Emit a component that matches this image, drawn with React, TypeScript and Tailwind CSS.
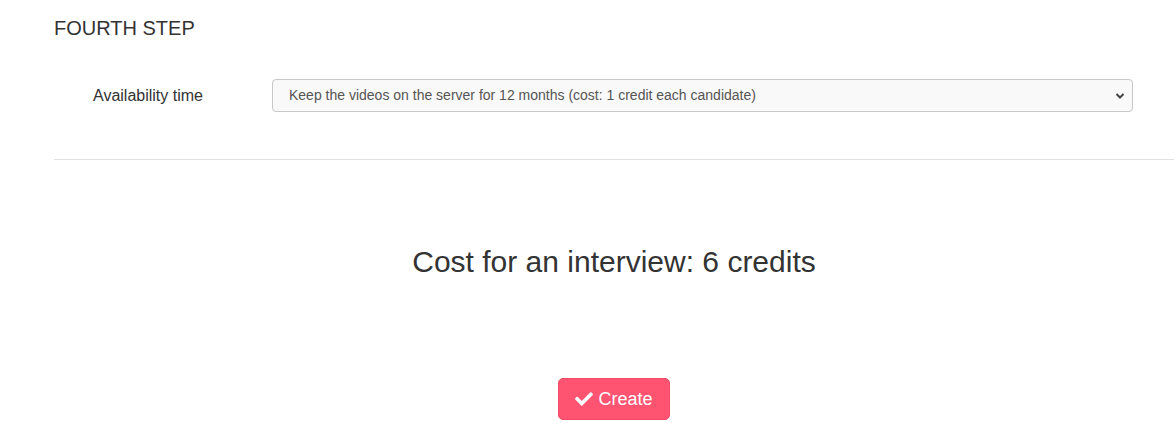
import React from "react";

export default function App() {
  return (
    <div className="w-[1176px] h-[434px] bg-white text-[#333] overflow-hidden" style={{ fontFamily: '"Liberation Sans", Arial, sans-serif' }}>
      <div className="ml-[54px] w-[1120px]">
        <h3 className="text-[20px] leading-[22px] pt-[17px] m-0">FOURTH STEP</h3>
        <div className="flex items-center mt-[40px]">
          <label className="w-[218px] pl-[39px] text-[16px]">Availability time</label>
          <div className="relative w-[861px]">
            <select
              defaultValue="12"
              className="appearance-none w-full h-[33px] border border-[#c8c8c8] rounded-[4px] bg-[#f9f9f9] pl-[16px] text-[14px] text-[#555] outline-none"
              style={{ fontFamily: '"Liberation Sans", Arial, sans-serif' }}
            >
              <option value="12">Keep the videos on the server for 12 months (cost: 1 credit each candidate)</option>
            </select>
            <svg className="absolute right-[8px] top-[13px] pointer-events-none" width="10" height="8" viewBox="0 0 10 8">
              <path d="M1.5 2 L5 5.5 L8.5 2" fill="none" stroke="#444" strokeWidth="2" />
            </svg>
          </div>
        </div>
        <div className="mt-[47px] border-t border-[#e2e2e2]" />
        <div className="text-center text-[30px] leading-[34px] mt-[85px]">Cost for an interview: 6 credits</div>
        <div className="flex justify-center mt-[99px]">
          <button className="flex items-center gap-[4px] h-[42px] pl-[15px] pr-[16px] rounded-[5px] bg-[#ff5471] text-white text-[18px] border border-[#f24a66]">
            <svg width="20" height="18" viewBox="0 0 512 512">
              <path fill="white" d="M173.898 439.404l-166.4-166.4c-9.997-9.997-9.997-26.206 0-36.204l36.203-36.204c9.997-9.998 26.207-9.998 36.204 0L192 312.69 432.095 72.596c9.997-9.997 26.207-9.997 36.204 0l36.203 36.204c9.997 9.997 9.997 26.206 0 36.204l-294.4 294.401c-9.998 9.997-26.207 9.997-36.204-.001z" />
            </svg>
            Create
          </button>
        </div>
      </div>
    </div>
  );
}
